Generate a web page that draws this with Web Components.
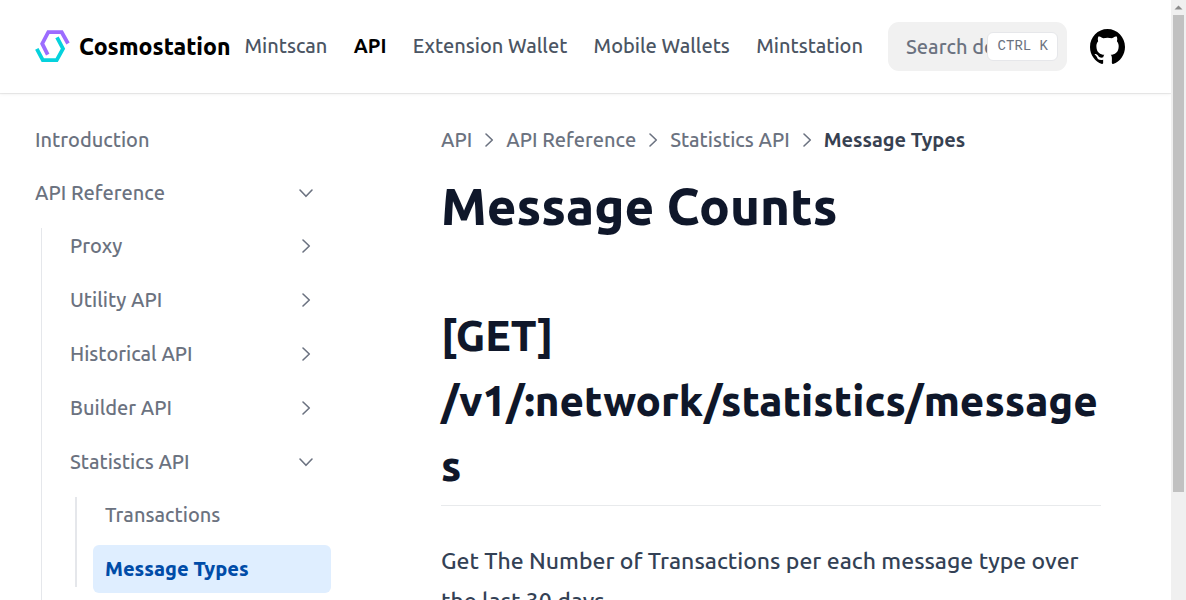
<!DOCTYPE html>
<html lang="en">
<head>
<meta charset="utf-8">
<meta name="viewport" content="width=device-width, initial-scale=1">
<title>Message Types – Cosmostation</title>
<style>
  html, body { height: 100%; margin: 0; }
  body { background: #fff; color: #0f172a; font-family: Ubuntu, "Noto Sans", sans-serif; font-weight: 500; overflow: hidden; }
</style>
</head>
<body>
<docs-app>
  <site-header slot="header">
    <nav-link href="#mintscan">Mintscan</nav-link>
    <nav-link href="#api" current>API</nav-link>
    <nav-link href="#extension">Extension Wallet</nav-link>
    <nav-link href="#mobile">Mobile Wallets</nav-link>
    <nav-link href="#mintstation">Mintstation</nav-link>
    <search-box slot="tools"></search-box>
    <github-link slot="tools"></github-link>
  </site-header>
  <side-nav slot="sidebar">
    <side-item>Introduction</side-item>
    <side-group label="API Reference" open>
      <side-group label="Proxy"></side-group>
      <side-group label="Utility API"></side-group>
      <side-group label="Historical API"></side-group>
      <side-group label="Builder API"></side-group>
      <side-group label="Statistics API" open inner>
        <side-item>Transactions</side-item>
        <side-item current>Message Types</side-item>
      </side-group>
    </side-group>
  </side-nav>
  <doc-article>
    <bread-crumbs slot="crumbs" path="API|API Reference|Statistics API|Message Types"></bread-crumbs>
    <span slot="title">Message Counts</span>
    <span slot="endpoint">[GET] /v1/:network/statistics/messages</span>
    Get The Number of Transactions per each message type over the last 30 days.
  </doc-article>
</docs-app>

<script>
const define = (name, html, setup) => {
  const template = document.createElement('template');
  template.innerHTML = html;
  customElements.define(name, class extends HTMLElement {
    constructor() {
      super();
      this.attachShadow({ mode: 'open' }).append(template.content.cloneNode(true));
    }
    connectedCallback() { if (setup) setup(this, this.shadowRoot); }
  });
};

define('chevron-icon', `
  <style>
    :host { display: block; flex: none; width: 20px; height: 20px; }
    :host([down]) { rotate: 90deg; }
    svg { display: block; width: 100%; height: 100%; }
  </style>
  <svg viewBox="0 0 20 20" fill="none" stroke="currentColor" stroke-width="1.6" stroke-linecap="round" stroke-linejoin="round" aria-hidden="true"><path d="M7 4l6.300 6L7 16"/></svg>`);

define('page-scrollbar', `
  <style>
    :host { display: grid; grid-template-rows: 15px 477fr 108fr; justify-items: center; background: #f0f0f0; }
    svg { width: 15px; height: 15px; }
    .thumb { width: 11px; background: #c1c1c1; }
  </style>
  <svg viewBox="0 0 15 15" aria-hidden="true"><path d="M3.500 9.500L7.500 5.500L11.500 9.500z" fill="#8b8b8b"/></svg>
  <div class="thumb"></div>`);

define('docs-app', `
  <style>
    :host { display: grid; grid-template-columns: minmax(0, 1fr) 15px; height: 100vh; }
    .page { overflow: hidden; }
    .columns { display: grid; grid-template-columns: 331px minmax(0, 1fr); }
  </style>
  <div class="page">
    <slot name="header"></slot>
    <div class="columns"><slot name="sidebar"></slot><slot></slot></div>
  </div>
  <page-scrollbar></page-scrollbar>`);

define('site-header', `
  <style>
    :host { display: block; background: #fff; box-shadow: 0 1px 1px rgba(0,0,0,.08), 0 2px 4px rgba(0,0,0,.03); }
    header { display: flex; align-items: center; height: 93px; padding: 0 46px 0 35px; box-sizing: border-box; }
    .brand { display: flex; align-items: center; gap: 9px; color: #000; font-size: 23px; line-height: 32px; font-weight: 800; text-decoration: none; margin-right: 14px; }
    .brand svg { width: 35px; height: 34px; flex: none; }
    nav { display: flex; flex: 1; justify-content: space-between; padding-bottom: 2px; }
    .tools { display: flex; align-items: center; gap: 23px; margin-left: 25px; }
  </style>
  <header>
    <a class="brand" href="#home">
      <svg viewBox="0 0 35 34" fill="none" stroke-width="3.800" aria-hidden="true">
        <path d="M12.700 24.700L7.200 13.700L13.300 2.200H26.700L33 13.500" stroke="#9c6cff"/>
        <path d="M1.800 18.800L7.800 30.200H21.700L28 18.700L22 7.400" stroke="#05d2dd"/>
      </svg>
      <span>Cosmostation</span>
    </a>
    <nav><slot></slot></nav>
    <div class="tools"><slot name="tools"></slot></div>
  </header>`);

define('nav-link', `
  <style>
    :host { display: block; }
    a { color: #4b5563; font-size: 20px; line-height: 28px; text-decoration: none; white-space: nowrap; }
    :host([current]) a { color: #000; font-weight: 600; }
  </style>
  <a><slot></slot></a>`, (host, root) => { root.querySelector('a').href = host.getAttribute('href'); });

define('search-box', `
  <style>
    :host { display: grid; position: relative; width: 179px; }
    input { box-sizing: border-box; width: 100%; height: 49px; padding: 0 18px; border: 0; border-radius: 11px; background: #f1f1f1; color: #111827; font: inherit; font-size: 20px; line-height: 28px; }
    input::placeholder { color: #6b7280; opacity: 1; }
    kbd { position: absolute; right: 9px; top: 10px; box-sizing: border-box; height: 29px; padding: 0 9px 0 10px; border: 1px solid #e6e7ea; border-radius: 6px; background: #fff; color: #6b7280; font: 14px/26px "Liberation Mono", monospace; white-space: nowrap; }
  </style>
  <input type="search" placeholder="Search documentation…" aria-label="Search documentation">
  <kbd>CTRL K</kbd>`);

define('github-link', `
  <style>
    :host { display: block; }
    a { display: block; color: #000; }
    svg { display: block; width: 35px; height: 35px; }
  </style>
  <a href="#github" aria-label="GitHub"><svg viewBox="3 3 18 18" fill="currentColor" aria-hidden="true"><path d="M12 3C7.0275 3 3 7.12937 3 12.2276C3 16.3109 5.57625 19.7597 9.15374 20.9824C9.60374 21.0631 9.77249 20.7863 9.77249 20.5441C9.77249 20.3249 9.76125 19.5982 9.76125 18.8254C7.5 19.2522 6.915 18.2602 6.735 17.7412C6.63375 17.4759 6.19499 16.6569 5.8125 16.4378C5.4975 16.2647 5.0475 15.838 5.80124 15.8264C6.51 15.8149 7.01625 16.4954 7.18499 16.7723C7.99499 18.1679 9.28875 17.7758 9.80625 17.5335C9.885 16.9337 10.1212 16.53 10.38 16.2993C8.3775 16.0687 6.285 15.2728 6.285 11.7432C6.285 10.7397 6.63375 9.9092 7.20749 9.26326C7.1175 9.03257 6.8025 8.08674 7.2975 6.81794C7.2975 6.81794 8.05125 6.57571 9.77249 7.76377C10.4925 7.55615 11.2575 7.45234 12.0225 7.45234C12.7875 7.45234 13.5525 7.55615 14.2725 7.76377C15.9937 6.56418 16.7475 6.81794 16.7475 6.81794C17.2424 8.08674 16.9275 9.03257 16.8375 9.26326C17.4113 9.9092 17.76 10.7281 17.76 11.7432C17.76 15.2843 15.6563 16.0687 13.6537 16.2993C13.98 16.5877 14.2613 17.1414 14.2613 18.0065C14.2613 19.2407 14.25 20.2326 14.25 20.5441C14.25 20.7863 14.4188 21.0746 14.8688 20.9824C16.6554 20.364 18.2079 19.1866 19.3078 17.6162C20.4077 16.0457 20.9995 14.1611 21 12.2276C21 7.12937 16.9725 3 12 3Z"/></svg></a>`);

define('side-nav', `
  <style>
    :host { display: block; }
    nav { display: grid; gap: 5px; padding: 23px 0 0 23px; }
  </style>
  <nav aria-label="Documentation"><slot></slot></nav>`);

define('side-item', `
  <style>
    :host { display: block; }
    a { display: block; padding: 10px 12px; border-radius: 6px; color: #6b7280; font-size: 20px; line-height: 28px; text-decoration: none; }
    :host([current]) a { background: #dfeeff; color: #004ca8; font-weight: 800; }
  </style>
  <a href="#page"><slot></slot></a>`);

define('side-group', `
  <style>
    :host { display: block; }
    button { display: flex; align-items: center; justify-content: space-between; width: 100%; padding: 10px 15px 10px 12px; border: 0; background: none; color: #6b7280; font: inherit; font-size: 20px; line-height: 28px; text-align: left; }
    .children { display: none; grid-template-columns: 1px minmax(0, 1fr); column-gap: 16px; margin: 5px 0 0 18px; }
    :host([open]) .children { display: grid; }
    .line { margin: 6px 0 0; background: #e5e7eb; }
    .items { display: grid; gap: 6px; padding-bottom: 48px; }
    :host([inner]) .children { grid-template-columns: 2px minmax(0, 1fr); margin-left: 17px; }
    :host([inner]) .line { margin-bottom: 6px; }
    :host([inner]) .items { padding-bottom: 0; }
  </style>
  <button type="button"><span></span><chevron-icon></chevron-icon></button>
  <div class="children"><div class="line"></div><div class="items"><slot></slot></div></div>`, (host, root) => {
    const button = root.querySelector('button');
    const sync = () => {
      button.setAttribute('aria-expanded', host.hasAttribute('open'));
      root.querySelector('chevron-icon').toggleAttribute('down', host.hasAttribute('open'));
    };
    root.querySelector('span').textContent = host.getAttribute('label');
    button.onclick = () => { host.toggleAttribute('open'); sync(); };
    sync();
  });

define('bread-crumbs', `
  <style>
    :host { display: block; }
    nav { display: flex; align-items: center; gap: 7px; color: #6b7280; font-size: 20px; line-height: 28px; white-space: nowrap; }
    a { color: inherit; text-decoration: none; }
    b { color: #374151; font-weight: 600; }
  </style>
  <nav aria-label="Breadcrumb"></nav>`, (host, root) => {
    const names = host.getAttribute('path').split('|');
    const nav = root.querySelector('nav');
    nav.replaceChildren();
    names.forEach((name, i) => {
      const last = i === names.length - 1;
      const node = document.createElement(last ? 'b' : 'a');
      node.textContent = name;
      if (!last) node.href = '#crumb';
      nav.append(node);
      if (!last) nav.append(document.createElement('chevron-icon'));
    });
  });

define('doc-article', `
  <style>
    :host { display: block; padding: 33px 70px 0 110px; }
    h1 { margin: 21px 0 0; font-size: 51px; line-height: 62px; font-weight: 800; }
    h2 { margin: 66px 0 0; padding-bottom: 7px; border-bottom: 1px solid #e8eaec; font-size: 42px; line-height: 65px; font-weight: 800; overflow-wrap: anywhere; }
    p { margin: 35px 0 0; color: #334155; font-size: 23px; line-height: 40px; }
  </style>
  <article>
    <slot name="crumbs"></slot>
    <h1><slot name="title"></slot></h1>
    <h2><slot name="endpoint"></slot></h2>
    <p><slot></slot></p>
  </article>`);
</script>
</body>
</html>
